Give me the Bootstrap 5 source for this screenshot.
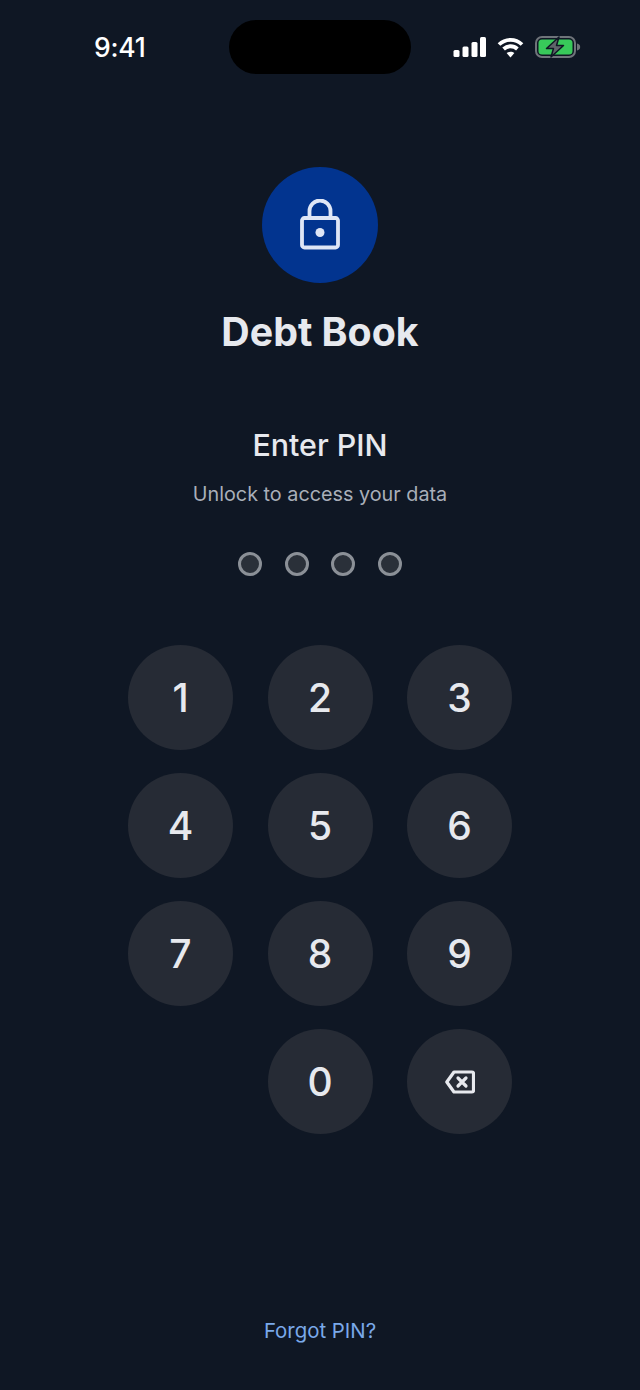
<!DOCTYPE html>
<html lang="en">
<head>
    <meta charset="UTF-8">
    <meta name="viewport" content="width=device-width, initial-scale=1.0">
    <title>Debt Book</title>
    <link href="https://cdn.jsdelivr.net/npm/bootstrap@5.3.0/dist/css/bootstrap.min.css" rel="stylesheet">
    <style>
        body {
            background-color: #0f1724;
            color: #e7e9ee;
            font-family: Inter, "Liberation Sans", sans-serif;
        }
        .lock-screen {
            height: 1390px;
            overflow: hidden;
        }
        .status-row {
            height: 94px;
            padding: 20px 59px 0 94px;
        }
        .status-time {
            width: 54px;
            font-size: 26.5px;
            font-weight: 500;
            line-height: 54px;
            color: #fff;
            letter-spacing: -0.2px;
        }
        .island {
            width: 182px;
            height: 54px;
            border-radius: 27px;
            background-color: #000;
            margin-left: 81px;
        }
        .status-icons {
            height: 54px;
            margin-left: auto;
            gap: 11px;
        }
        .logo-disc {
            width: 116px;
            height: 116px;
            margin-top: 73px;
            background-color: #02348f;
        }
        .app-title {
            margin: 24px 0 0;
            font-size: 39.3px;
            line-height: 50px;
            font-weight: 700;
        }
        .pin-title {
            margin: 68px 0 0;
            font-size: 30.4px;
            line-height: 40px;
            font-weight: 500;
        }
        .pin-sub {
            margin: 15px 0 0;
            font-size: 19.8px;
            line-height: 28px;
            color: #a9afb9;
        }
        .pin-dots {
            margin-top: 44px;
            gap: 22.5px;
        }
        .pin-dot {
            width: 24px;
            height: 24px;
            border: 3px solid #8b9097;
            background-color: #2a3039;
        }
        .keypad {
            margin-top: 69px;
            display: grid;
            grid-template-columns: repeat(3, 105px);
            grid-auto-rows: 105px;
            column-gap: 34.5px;
            row-gap: 23px;
        }
        .key-btn {
            width: 105px;
            height: 105px;
            border: 0;
            padding: 2px 0 0;
            background-color: #262b35;
            color: #e7e9ee;
            font-size: 39px;
            font-weight: 500;
        }
        .forgot-link {
            margin-top: 183px;
            font-size: 20.4px;
            line-height: 28px;
            color: #7aa9ea;
            text-decoration: none;
        }
    </style>
</head>
<body>
    <div class="lock-screen d-flex flex-column align-items-center">
        <div class="status-row d-flex align-items-start w-100">
            <div class="status-time">9:41</div>
            <div class="island"></div>
            <div class="status-icons d-flex align-items-center">
                <svg width="33" height="21" viewBox="0 0 33 21" fill="#fff"><rect x="0.500" y="13" width="6" height="7" rx="1.500"/><rect x="9.500" y="9.500" width="6" height="10.500" rx="1.500"/><rect x="18.500" y="5" width="6" height="15" rx="1.500"/><rect x="27" y="0" width="6" height="20" rx="1.500"/></svg>
                <svg width="27" height="21" viewBox="0 0 27 21" fill="none" stroke="#fff" stroke-width="3.800"><path d="M2 7.500C8.500 1.200 18.500 1.200 25 7.500"/><path d="M6.600 12C10.500 8.300 16.500 8.300 20.400 12"/><path d="M13.500 20.500l-3.900-4.400c2.200-1.800 5.600-1.800 7.800 0z" fill="#fff" stroke="none"/></svg>
                <svg width="46" height="22" viewBox="0 0 46 22"><rect x="1" y="1" width="39" height="20" rx="6" fill="none" stroke="#6f747a" stroke-width="2"/><rect x="3.500" y="3.500" width="34" height="15" rx="3.500" fill="#38c95a"/><path d="M42 7.500c2 .4 3.200 1.800 3.200 3.500s-1.200 3.100-3.200 3.500z" fill="#6f747a"/><path d="M24 1L11.500 12.500h7L16 21 28.500 9.500h-7z" fill="#5f6469" stroke="#0f1724" stroke-width="1.500" stroke-linejoin="round"/></svg>
            </div>
        </div>

        <div class="logo-disc rounded-circle d-flex align-items-center justify-content-center">
            <svg width="43" height="52" viewBox="0 0 43 52" fill="none" stroke="#dfe6f6" stroke-width="3.800" stroke-linejoin="round"><rect x="3" y="19" width="36" height="29.500" rx="2.500"/><path d="M10.500 19v-7a10.500 10.500 0 0 1 21 0v7"/><circle cx="21" cy="33.500" r="4.500" fill="#dfe6f6" stroke="none"/></svg>
        </div>
        <h1 class="app-title">Debt Book</h1>

        <h2 class="pin-title">Enter PIN</h2>
        <p class="pin-sub">Unlock to access your data</p>

        <div class="pin-dots d-flex">
            <span class="pin-dot rounded-circle"></span>
            <span class="pin-dot rounded-circle"></span>
            <span class="pin-dot rounded-circle"></span>
            <span class="pin-dot rounded-circle"></span>
        </div>

        <div class="keypad">
            <button type="button" class="key-btn rounded-circle">1</button>
            <button type="button" class="key-btn rounded-circle">2</button>
            <button type="button" class="key-btn rounded-circle">3</button>
            <button type="button" class="key-btn rounded-circle">4</button>
            <button type="button" class="key-btn rounded-circle">5</button>
            <button type="button" class="key-btn rounded-circle">6</button>
            <button type="button" class="key-btn rounded-circle">7</button>
            <button type="button" class="key-btn rounded-circle">8</button>
            <button type="button" class="key-btn rounded-circle">9</button>
            <div></div>
            <button type="button" class="key-btn rounded-circle">0</button>
            <button type="button" class="key-btn rounded-circle p-0 d-flex align-items-center justify-content-center" aria-label="Delete">
                <svg width="30" height="24" viewBox="0 0 30 24" fill="none" stroke="#e7e9ee" stroke-width="3.200" stroke-linejoin="round" stroke-linecap="round"><path d="M9 2H27a1.500 1.500 0 0 1 1.500 1.500v17A1.500 1.500 0 0 1 27 22H9L1.800 12z"/><path d="M13 8l8 8M21 8l-8 8"/></svg>
            </button>
        </div>

        <a href="#" class="forgot-link">Forgot PIN?</a>
    </div>

    <script src="https://cdn.jsdelivr.net/npm/bootstrap@5.3.0/dist/js/bootstrap.bundle.min.js"></script>
</body>
</html>
